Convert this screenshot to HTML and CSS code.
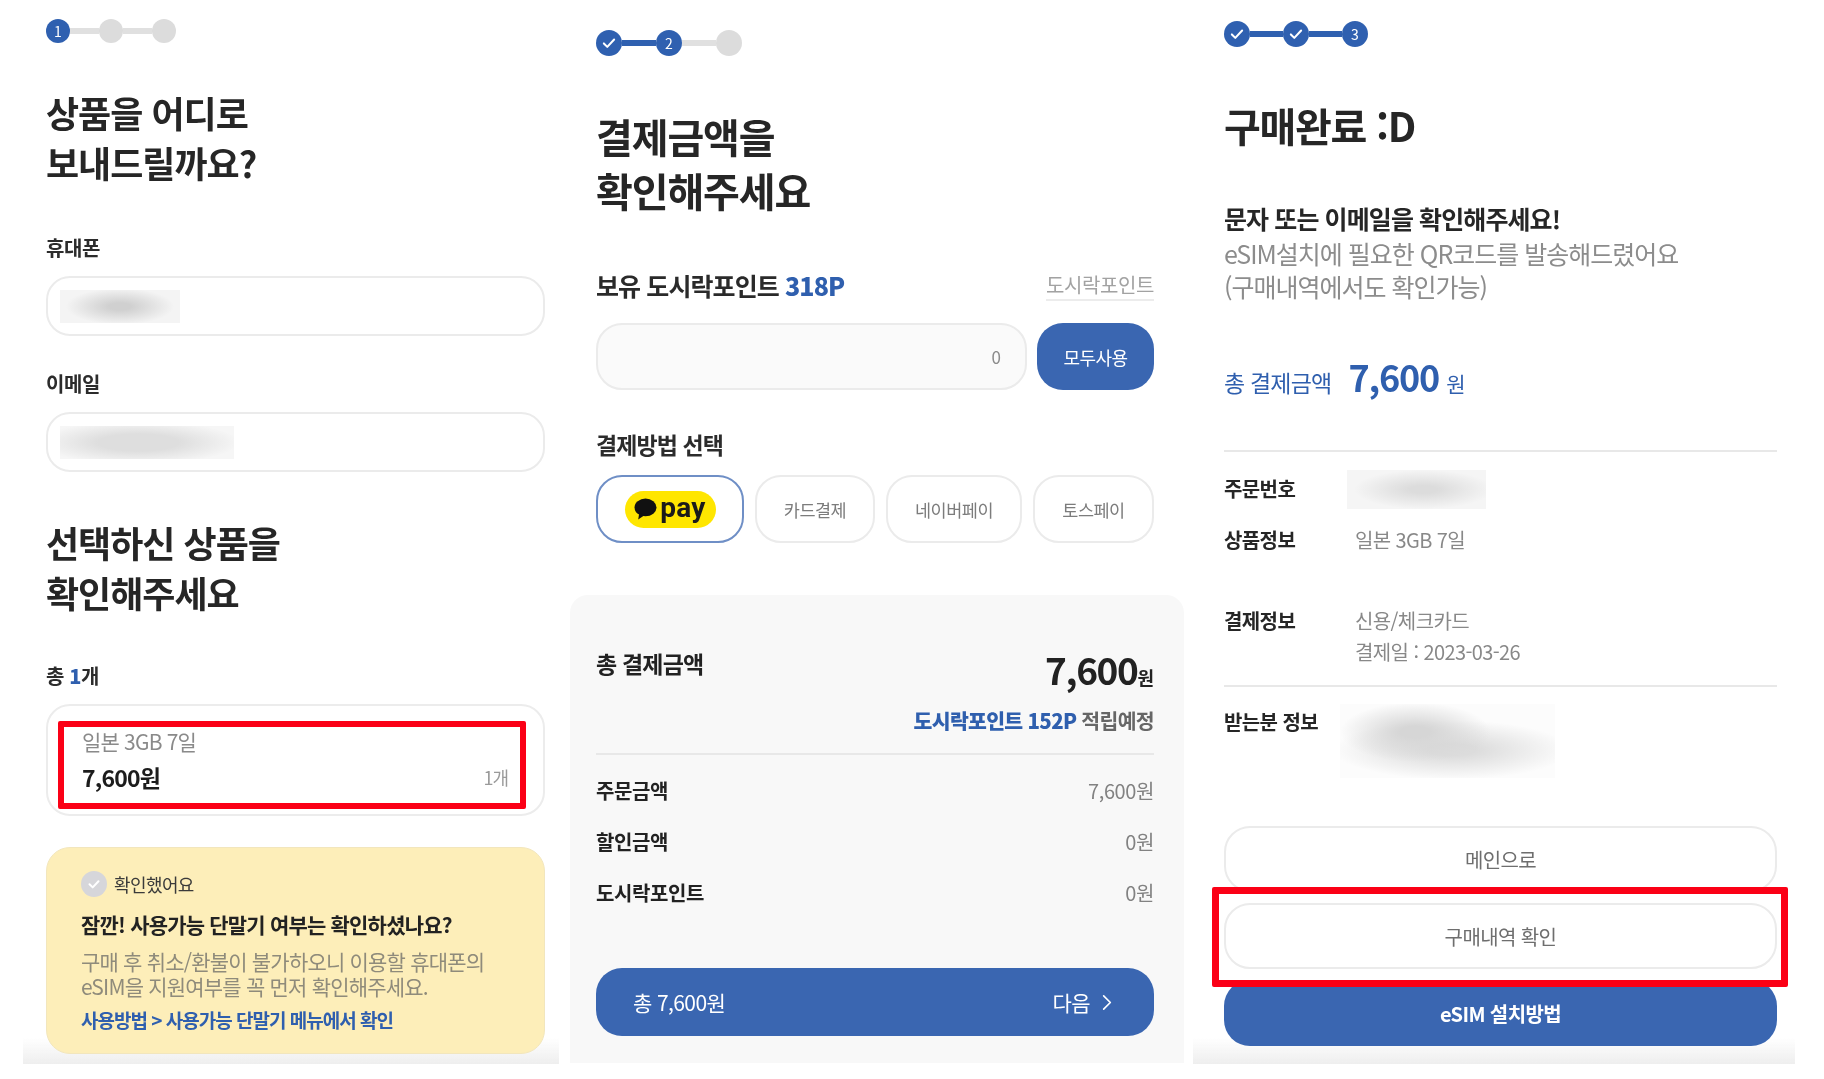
FILE: index.html
```html
<!DOCTYPE html>
<html lang="ko">
<head>
<meta charset="utf-8">
<title>eSIM 구매</title>
<link rel="stylesheet" href="styles.css">
</head>
<body>
<main class="board">

  <section class="panel panel-one">
    <div class="steps">
      <span class="dot on">1</span><span class="line"></span><span class="dot"></span><span class="line"></span><span class="dot"></span>
    </div>
    <h1 class="title title-a">상품을 어디로<br>보내드릴까요?</h1>
    <div class="label label-a">휴대폰</div>
    <div class="field field-a"><span class="redact redact-phone"></span></div>
    <div class="label label-b">이메일</div>
    <div class="field field-b"><span class="redact redact-mail"></span></div>
    <h2 class="title title-b">선택하신 상품을<br>확인해주세요</h2>
    <div class="label label-c">총 <b class="blue">1</b>개</div>
    <div class="item">
      <div class="item-name">일본 3GB 7일</div>
      <div class="item-row"><span class="item-price">7,600원</span><span class="item-qty">1개</span></div>
      <span class="mark mark-item"></span>
    </div>
    <div class="notice">
      <div class="notice-check">
        <svg class="check-icon" viewBox="0 0 26 26"><circle cx="13" cy="13" r="13" fill="#d6d6da"/><path d="M8.5 13.2l3.2 3.2 5.8-6.2" fill="none" stroke="#fff" stroke-width="2" stroke-linecap="round" stroke-linejoin="round"/></svg>
        <span>확인했어요</span>
      </div>
      <div class="notice-title">잠깐! 사용가능 단말기 여부는 확인하셨나요?</div>
      <p class="notice-text">구매 후 취소/환불이 불가하오니 이용할 휴대폰의<br>eSIM을 지원여부를 꼭 먼저 확인해주세요.</p>
      <div class="notice-link">사용방법 &gt; 사용가능 단말기 메뉴에서 확인</div>
    </div>
    <span class="fade"></span>
  </section>

  <section class="panel panel-two">
    <div class="steps steps-lg">
      <span class="dot on"><svg class="tick" viewBox="0 0 14 14"><path d="M2.5 7.4l3 3 6-6.4" fill="none" stroke="#fff" stroke-width="1.8" stroke-linecap="round" stroke-linejoin="round"/></svg></span><span class="line on"></span><span class="dot on">2</span><span class="line"></span><span class="dot"></span>
    </div>
    <h1 class="title title-c">결제금액을<br>확인해주세요</h1>
    <div class="points-head">
      <span class="points-label">보유 도시락포인트 <b class="blue">318P</b></span>
      <span class="points-link">도시락포인트</span>
    </div>
    <div class="points-use">
      <div class="points-input">0</div>
      <div class="points-all">모두사용</div>
    </div>
    <div class="pay-label">결제방법 선택</div>
    <div class="pay-row">
      <div class="pay pay-kakao">
        <span class="kakao-pill">
          <svg class="kakao-bubble" viewBox="0 0 22 20"><ellipse cx="11" cy="8.5" rx="10.5" ry="8.5" fill="#111"/><path d="M5 14l-1 6 6-4z" fill="#111"/></svg>
          <span class="kakao-text">pay</span>
        </span>
      </div>
      <div class="pay pay-card">카드결제</div>
      <div class="pay pay-naver">네이버페이</div>
      <div class="pay pay-toss">토스페이</div>
    </div>
    <div class="summary">
      <div class="summary-head">
        <span class="summary-label">총 결제금액</span>
        <span class="summary-amount">7,600<small>원</small></span>
      </div>
      <div class="summary-note"><b class="blue">도시락포인트 152P</b> 적립예정</div>
      <hr class="rule rule-summary">
      <div class="summary-row"><b>주문금액</b><span>7,600원</span></div>
      <div class="summary-row"><b>할인금액</b><span>0원</span></div>
      <div class="summary-row"><b>도시락포인트</b><span>0원</span></div>
      <div class="next">
        <span>총 7,600원</span>
        <span class="next-go">다음
          <svg class="chevron" viewBox="0 0 12 20"><path d="M2 2l8 8-8 8" fill="none" stroke="#fff" stroke-width="2" stroke-linecap="round" stroke-linejoin="round"/></svg>
        </span>
      </div>
    </div>
  </section>

  <section class="panel panel-three">
    <div class="steps steps-lg steps-done">
      <span class="dot on"><svg class="tick" viewBox="0 0 14 14"><path d="M2.5 7.4l3 3 6-6.4" fill="none" stroke="#fff" stroke-width="1.8" stroke-linecap="round" stroke-linejoin="round"/></svg></span><span class="line on"></span><span class="dot on"><svg class="tick" viewBox="0 0 14 14"><path d="M2.5 7.4l3 3 6-6.4" fill="none" stroke="#fff" stroke-width="1.8" stroke-linecap="round" stroke-linejoin="round"/></svg></span><span class="line on"></span><span class="dot on">3</span>
    </div>
    <h1 class="title title-d">구매완료 :D</h1>
    <div class="done-title">문자 또는 이메일을 확인해주세요!</div>
    <p class="done-text">eSIM설치에 필요한 QR코드를 발송해드렸어요<br>(구매내역에서도 확인가능)</p>
    <div class="done-total"><span class="done-label">총 결제금액</span><span class="done-amount">7,600</span><span class="done-unit">원</span></div>
    <hr class="rule rule-a">
    <div class="info info-order"><b>주문번호</b><span class="redact redact-order"></span></div>
    <div class="info info-product"><b>상품정보</b><span>일본 3GB 7일</span></div>
    <div class="info info-pay"><b>결제정보</b><span>신용/체크카드<br>결제일 : 2023-03-26</span></div>
    <hr class="rule rule-b">
    <div class="info info-recipient"><b>받는분 정보</b><span class="redact redact-recipient"></span></div>
    <div class="actions">
      <div class="action">메인으로</div>
      <div class="action">구매내역 확인</div>
      <div class="action action-primary">eSIM 설치방법</div>
      <span class="mark mark-action"></span>
    </div>
    <span class="fade"></span>
  </section>

</main>
</body>
</html>
```

FILE: styles.css
```css
* { box-sizing: border-box; }

html, body { margin: 0; padding: 0; background: #fff; }

body {
  width: 1824px;
  height: 1079px;
  overflow: hidden;
  font-family: "Noto Sans CJK KR", "Noto Sans", sans-serif;
  color: #222;
}

.board {
  display: flex;
  padding-left: 23px;
  height: 1064px;
  filter: blur(0.5px);
}

.panel {
  position: relative;
  height: 1064px;
  overflow: hidden;
}

.panel-one { width: 536px; padding: 19px 14px 0 23px; }
.panel-two { width: 614px; margin-left: 11px; padding: 30px 30px 0 26px; }
.panel-three { width: 602px; margin-left: 9px; padding: 21px 18px 0 31px; }

.blue { color: #2f5fae; }

/* progress steps */
.steps { display: flex; align-items: center; }

.dot {
  flex: none;
  display: flex;
  align-items: center;
  justify-content: center;
  width: 24px;
  height: 24px;
  border-radius: 50%;
  background: #dcdcdc;
  color: #fff;
  font-size: 14px;
  line-height: 1;
}

.dot.on { background: #2f60b0; }

.line { flex: none; width: 29px; height: 6px; background: #e0e0e0; }
.line.on { background: #2f60b0; }

.steps-lg .dot { width: 26px; height: 26px; }
.steps-lg .line { width: 34px; }
.steps-done .line { width: 33px; }

.tick { width: 16px; height: 16px; }

/* headings */
.title {
  margin: 0;
  color: #262626;
  font-weight: 700;
  font-size: 36px;
  line-height: 50px;
  letter-spacing: -1px;
}

.title-a { margin-top: 44px; }
.title-b { margin-top: 46px; line-height: 49.5px; }
.title-c { margin-top: 53px; font-size: 40px; line-height: 54px; letter-spacing: -1.1px; }
.title-d { margin-top: 51px; font-size: 40px; line-height: 54px; letter-spacing: -1.3px; }

/* first panel */
.label {
  font-size: 20px;
  font-weight: 700;
  line-height: 28px;
  letter-spacing: -0.4px;
  color: #2c2c2c;
}

.label-a { margin-top: 47px; }
.label-b { margin-top: 34px; }
.label-c { margin-top: 45px; }

.field {
  display: flex;
  align-items: center;
  height: 60px;
  padding-left: 12px;
  border: 2px solid #ebebeb;
  border-radius: 24px;
}

.field-a { margin-top: 14px; }
.field-b { margin-top: 14px; }

.redact { display: block; }

.redact-phone {
  width: 120px;
  height: 33px;
  background: radial-gradient(ellipse 45% 55% at 50% 50%, #d0d0d0 20%, #f4f4f4 100%);
}

.redact-mail {
  width: 174px;
  height: 33px;
  background: radial-gradient(ellipse 58% 65% at 45% 50%, #dedede 40%, #f6f6f6 100%);
}

.item {
  position: relative;
  height: 112px;
  margin-top: 14px;
  padding: 21px 35px 0 34px;
  border: 2px solid #ececec;
  border-radius: 24px;
}

.item-name {
  font-size: 21px;
  line-height: 28px;
  letter-spacing: -0.8px;
  color: #8a8a8a;
}

.item-row {
  display: flex;
  justify-content: space-between;
  align-items: center;
  margin-top: 6px;
}

.item-price {
  font-size: 23px;
  font-weight: 700;
  line-height: 32px;
  letter-spacing: -0.8px;
  color: #1c1c1c;
}

.item-qty {
  font-size: 18px;
  line-height: 32px;
  letter-spacing: -1px;
  color: #9a9a9a;
}

.mark {
  position: absolute;
  border-style: solid;
  border-color: #fb0016;
  border-radius: 2px;
}

.mark-item {
  left: 10px;
  top: 15px;
  width: 468px;
  height: 88px;
  border-width: 6px;
}

.notice {
  position: relative;
  z-index: 1;
  height: 207px;
  margin-top: 31px;
  padding: 22px 30px 0 34px;
  background: #fdeeb9;
  border: 1px solid #f2e6bd;
  border-radius: 24px;
}

.notice-check {
  display: flex;
  align-items: center;
  gap: 7px;
  height: 28px;
  font-size: 18px;
  letter-spacing: -0.6px;
  color: #3a3a3a;
}

.check-icon { width: 26px; height: 26px; }

.notice-title {
  margin-top: 11px;
  font-size: 21px;
  font-weight: 700;
  line-height: 30px;
  letter-spacing: -0.8px;
  white-space: nowrap;
  color: #222;
}

.notice-text {
  margin: 10px 0 0;
  font-size: 21px;
  line-height: 25px;
  letter-spacing: -0.8px;
  white-space: nowrap;
  color: #8f8b7b;
}

.notice-link {
  margin-top: 8px;
  font-size: 19px;
  font-weight: 700;
  line-height: 26px;
  letter-spacing: -1px;
  white-space: nowrap;
  color: #2f5fae;
}

.fade {
  position: absolute;
  left: 0;
  right: 0;
  bottom: 0;
  height: 26px;
  background: linear-gradient(rgba(236, 236, 236, 0), #eeeeee);
}

/* second panel */
.points-head {
  display: flex;
  justify-content: space-between;
  align-items: center;
  height: 32px;
  margin-top: 52px;
}

.points-label {
  font-size: 25px;
  font-weight: 700;
  letter-spacing: -0.9px;
  color: #2a2a2a;
}

.points-link {
  font-size: 20px;
  letter-spacing: -0.4px;
  color: #a2a2a2;
  border-bottom: 2px solid #ececec;
}

.points-use {
  display: flex;
  gap: 10px;
  height: 67px;
  margin-top: 22px;
}

.points-input {
  flex: 1;
  display: flex;
  align-items: center;
  justify-content: flex-end;
  padding-right: 24px;
  background: #fafafa;
  border: 2px solid #ebebeb;
  border-radius: 26px;
  font-size: 17px;
  color: #8c8c8c;
}

.points-all {
  display: flex;
  align-items: center;
  justify-content: center;
  width: 117px;
  background: #3a66b1;
  border-radius: 26px;
  color: #fff;
  font-size: 18px;
  letter-spacing: -0.6px;
}

.pay-label {
  margin-top: 39px;
  font-size: 23px;
  font-weight: 700;
  line-height: 30px;
  letter-spacing: -0.9px;
  color: #2c2c2c;
}

.pay-row {
  display: flex;
  gap: 11px;
  height: 68px;
  margin-top: 16px;
}

.pay {
  display: flex;
  align-items: center;
  justify-content: center;
  border: 2px solid #ebebeb;
  border-radius: 26px;
  font-size: 17.5px;
  letter-spacing: -0.5px;
  color: #7c7c7c;
}

.pay-kakao { width: 148px; border-color: #6f8fc6; }
.pay-card { width: 120px; }
.pay-naver { width: 136px; }
.pay-toss { width: 121px; }

.kakao-pill {
  display: flex;
  align-items: center;
  justify-content: center;
  gap: 3px;
  width: 91px;
  height: 37px;
  border-radius: 19px;
  background: #ffe600;
}

.kakao-text {
  font-family: "Roboto", "Liberation Sans", sans-serif;
  font-size: 28px;
  font-weight: 700;
  line-height: 30px;
  letter-spacing: 0.3px;
  color: #1a1a1a;
  margin-top: -3px;
}

.kakao-bubble { width: 23px; height: 22px; }

.summary {
  height: 468px;
  margin: 52px -30px 0 -26px;
  padding: 48px 30px 0 26px;
  background: #f8f8f8;
  border-radius: 18px 18px 0 0;
}

.summary-head {
  display: flex;
  justify-content: space-between;
  align-items: flex-start;
}

.summary-label {
  font-size: 23px;
  font-weight: 700;
  line-height: 40px;
  letter-spacing: -0.8px;
}

.summary-amount {
  font-size: 37px;
  font-weight: 700;
  line-height: 52px;
  letter-spacing: -1.4px;
  color: #222;
}

.summary-amount small { font-size: 18px; letter-spacing: 0; }

.summary-note {
  margin-top: 3px;
  text-align: right;
  font-size: 20.5px;
  font-weight: 700;
  line-height: 28px;
  letter-spacing: -0.7px;
  color: #666;
}

.rule {
  height: 2px;
  margin: 0;
  border: 0;
  background: #e8e8e8;
}

.rule-summary { margin-top: 19px; margin-bottom: 1px; }
.rule-a { margin-top: 50px; }
.rule-b { margin-top: 18px; }

.summary-row {
  display: flex;
  justify-content: space-between;
  margin-top: 21px;
  font-size: 20px;
  line-height: 30px;
  letter-spacing: -0.4px;
}

.summary-row span { color: #828282; }

.next {
  display: flex;
  justify-content: space-between;
  align-items: center;
  height: 68px;
  margin-top: 60px;
  padding: 0 42px 0 37px;
  background: #3a66b1;
  border-radius: 26px;
  color: #fff;
  font-size: 21px;
  letter-spacing: -0.6px;
}

.next-go { display: flex; align-items: center; gap: 12px; }

.chevron { width: 10px; height: 17px; }

/* third panel */
.done-title {
  margin-top: 49px;
  font-size: 25px;
  font-weight: 700;
  line-height: 34px;
  letter-spacing: -0.9px;
  color: #262626;
}

.done-text {
  margin: 2px 0 0;
  font-size: 25px;
  line-height: 33px;
  letter-spacing: -1px;
  color: #8c8c8c;
  white-space: nowrap;
}

.done-total {
  display: flex;
  align-items: baseline;
  height: 48px;
  margin-top: 49px;
  color: #2f5fae;
}

.done-label { font-size: 23px; letter-spacing: -0.8px; }

.done-amount {
  margin-left: 17px;
  font-size: 36px;
  font-weight: 700;
  line-height: 48px;
  letter-spacing: -1.2px;
}

.done-unit { margin-left: 7px; font-size: 21px; }

.info {
  display: grid;
  grid-template-columns: 131px 1fr;
  font-size: 20px;
  line-height: 30px;
  letter-spacing: -0.6px;
}

.info b { color: #262626; white-space: nowrap; }
.info span { color: #888; white-space: nowrap; }

.info-order { margin-top: 22px; }
.info-product { margin-top: 16px; }
.info-pay { margin-top: 50px; line-height: 31px; }
.info-recipient { margin-top: 20px; }

.redact-order {
  width: 139px;
  height: 39px;
  margin: -4px 0 0 -8px;
  background: radial-gradient(ellipse 50% 50% at 55% 50%, #dcdcdc 20%, #f5f5f5 100%);
}

.redact-recipient {
  width: 215px;
  height: 74px;
  margin: -3px 0 0 -15px;
  background:
    radial-gradient(ellipse 35% 40% at 35% 38%, #d6d6d6 20%, rgba(240, 240, 240, 0) 100%),
    radial-gradient(ellipse 55% 40% at 52% 62%, #dcdcdc 20%, #fcfcfc 100%);
}

.actions {
  position: relative;
  z-index: 1;
  display: flex;
  flex-direction: column;
  gap: 11px;
  margin-top: 48px;
}

.action {
  display: flex;
  align-items: center;
  justify-content: center;
  height: 66px;
  border: 2px solid #ebebeb;
  border-radius: 26px;
  background: #fff;
  font-size: 20px;
  letter-spacing: -0.6px;
  color: #6e6e6e;
}

.action-primary {
  border: 0;
  background: #3a66b1;
  color: #fff;
  font-weight: 700;
}

.mark-action {
  left: -12px;
  top: 61px;
  width: 576px;
  height: 100px;
  border-width: 7px;
}
```
